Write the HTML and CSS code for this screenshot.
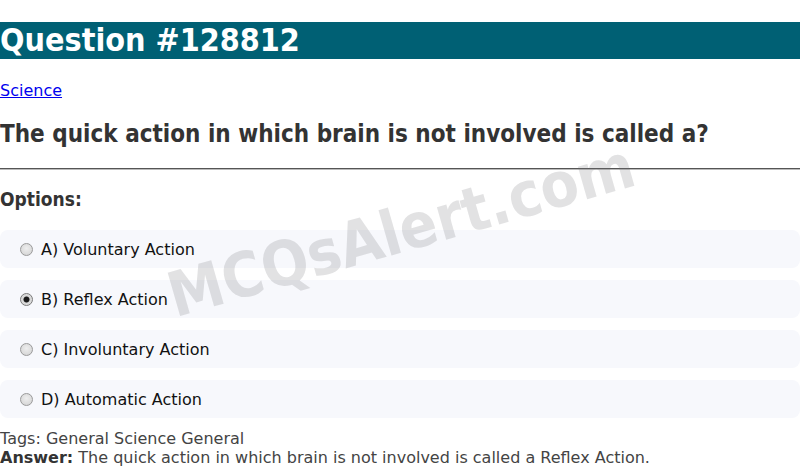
FILE: index.html
```html
<!DOCTYPE html>
<html>
<head>
<meta charset="utf-8">
<link rel="stylesheet" href="styles.css">
</head>
<body>
<h1 class="title">Question #128812</h1>
<a class="cat" href="#">Science</a>
<h2 class="question">The quick action in which brain is not involved is called a?</h2>
<hr class="rule">
<h3 class="opts-label">Options:</h3>
<div class="options">
  <label class="option"><input class="radio" type="radio" name="q"> A) Voluntary Action</label>
  <label class="option"><input class="radio" type="radio" name="q" checked> B) Reflex Action</label>
  <label class="option"><input class="radio" type="radio" name="q"> C) Involuntary Action</label>
  <label class="option"><input class="radio" type="radio" name="q"> D) Automatic Action</label>
</div>
<div class="tags">Tags: General Science General</div>
<div class="answer"><b>Answer:</b> The quick action in which brain is not involved is called a Reflex Action.</div>
<div class="watermark">MCQsAlert.com</div>
</body>
</html>
```
FILE: styles.css
```css
html, body { margin: 0; padding: 0; }
body { font-family: "DejaVu Sans", sans-serif; color: #333; position: relative; overflow: hidden; height: 467px; }
.title { background: #006074; color: #fff; font-family: "DejaVu Sans Condensed", "DejaVu Sans", sans-serif; font-size: 32px; font-weight: bold; margin: 22px 0 0; line-height: 37px; }
.cat { display: inline-block; margin-top: 22px; color: #0000ee; font-size: 16px; line-height: 19px; }
.question { font-family: "DejaVu Sans Condensed", "DejaVu Sans", sans-serif; font-size: 24px; font-weight: bold; margin: 21px 0 0; line-height: 26px; color: #333; }
.rule { margin: 21px 0 0; border: 0; border-top: 1px solid #555; border-bottom: 1px solid #bbb; height: 0; }
.opts-label { font-family: "DejaVu Sans Condensed", "DejaVu Sans", sans-serif; font-size: 19px; font-weight: bold; margin: 19px 0 0; line-height: 21px; }
.options { display: flex; flex-direction: column; gap: 12px; margin-top: 20px; }
.option { display: flex; align-items: center; height: 38px; background: #f7f8fc; border-radius: 8px; padding-left: 20px; font-size: 16px; color: #111; }
.radio { -webkit-appearance: none; appearance: none; margin: 0 8px 0 0; width: 13px; height: 13px; border-radius: 50%; border: 1px solid #9a9a9a; background: radial-gradient(circle at 50% 40%, #eeeeee, #d0d0d0); box-sizing: border-box; }
.radio:checked { background: radial-gradient(circle, #1a1a1a 0, #1a1a1a 2.6px, #d6d6d6 3.4px, #e4e4e4 100%); border-color: #7a7a7a; }
.tags { margin-top: 11px; font-size: 16px; color: #444; line-height: 19px; }
.answer { font-size: 16px; color: #444; line-height: 19px; }
.answer b { color: #333; }
.watermark { position: absolute; left: 178px; top: 265px; font-family: "DejaVu Sans Condensed", "DejaVu Sans", sans-serif; font-size: 62px; line-height: 1; font-weight: bold; color: rgba(120,120,125,0.21); transform: rotate(-16deg); transform-origin: left bottom; white-space: nowrap; pointer-events: none; }
```
